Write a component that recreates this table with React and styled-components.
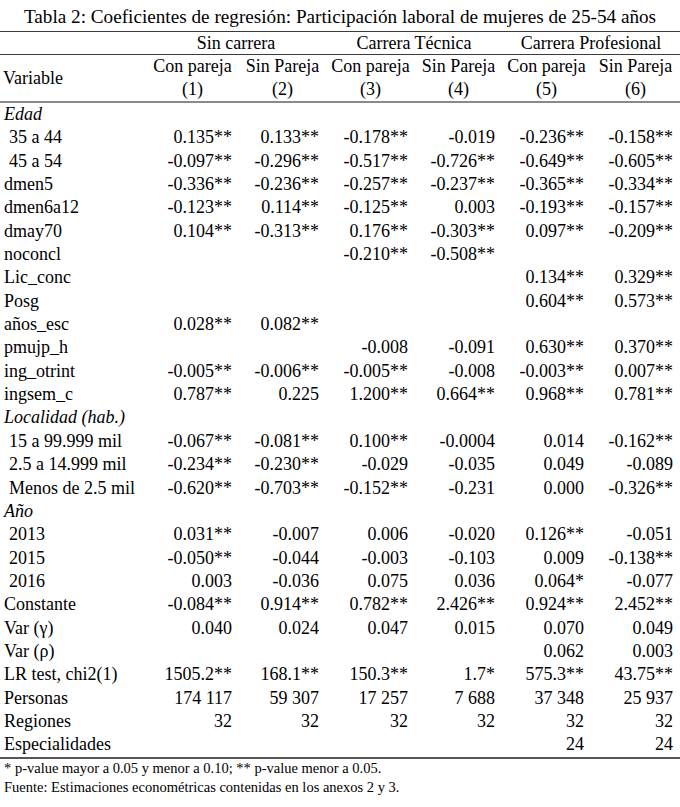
import React from "react";
import styled, { createGlobalStyle } from "styled-components";

const serif = `"Liberation Serif", "Times New Roman", Times, serif`;

const Global = createGlobalStyle`
  html, body { margin: 0; padding: 0; background: #fff; }
  body { font-family: ${serif}; color: #000; }
  table, th, td { font-family: ${serif}; }
`;

const Page = styled.div`
  width: 680px;
  font-family: ${serif};
`;

const Title = styled.div`
  box-sizing: border-box;
  height: 32px;
  padding-top: 5px;
  font-size: 19.2px;
  line-height: 23px;
  text-align: center;
  white-space: nowrap;
  border-bottom: 1px solid #3a3a3a;
`;

const Table = styled.table`
  width: 680px;
  border-collapse: collapse;
  table-layout: fixed;
  font-family: ${serif};
  font-size: 18px;
`;

const GroupRow = styled.tr`
  height: 22px;
  border-bottom: 1px solid #3a3a3a;
`;

const GroupCell = styled.th`
  font-family: ${serif};
  font-weight: normal;
  text-align: center;
  padding: 0;
  line-height: 22px;
`;

const SubRow = styled.tr`
  height: 23px;
  border-bottom: ${(p) => (p.$last ? "2px solid #8a8a8a" : "none")};
`;

const HeadCell = styled.th`
  font-family: ${serif};
  font-weight: normal;
  text-align: ${(p) => (p.$left ? "left" : "center")};
  padding: ${(p) => (p.$left ? "0 0 0 3px" : "0")};
  line-height: 23px;
  white-space: nowrap;
  vertical-align: middle;
`;

const BodyRow = styled.tr`
  height: 23.35px;
  border-bottom: ${(p) => (p.$last ? "2px solid #555" : "none")};
`;

const LabelCell = styled.td`
  font-family: ${serif};
  padding: 0 0 0 ${(p) => (p.$indent ? "9px" : "4px")};
  font-style: ${(p) => (p.$italic ? "italic" : "normal")};
  white-space: nowrap;
  line-height: 23.35px;
`;

const NumCell = styled.td`
  font-family: ${serif};
  padding: 0 7px 0 0;
  text-align: right;
  white-space: nowrap;
  line-height: 23.35px;
`;

const Notes = styled.div`
  font-family: ${serif};
  padding: 0 0 0 4px;
  font-size: 14.5px;
  line-height: 19px;
  white-space: nowrap;
`;

const NoteLine = styled.div`
  font-family: ${serif};
`;

const cols = [146, 93, 87, 89, 87, 89, 89];

const rows = [
  { label: "Edad", italic: true, v: [] },
  { label: "35 a 44", indent: true, v: ["0.135**", "0.133**", "-0.178**", "-0.019", "-0.236**", "-0.158**"] },
  { label: "45 a 54", indent: true, v: ["-0.097**", "-0.296**", "-0.517**", "-0.726**", "-0.649**", "-0.605**"] },
  { label: "dmen5", v: ["-0.336**", "-0.236**", "-0.257**", "-0.237**", "-0.365**", "-0.334**"] },
  { label: "dmen6a12", v: ["-0.123**", "0.114**", "-0.125**", "0.003", "-0.193**", "-0.157**"] },
  { label: "dmay70", v: ["0.104**", "-0.313**", "0.176**", "-0.303**", "0.097**", "-0.209**"] },
  { label: "noconcl", v: ["", "", "-0.210**", "-0.508**", "", ""] },
  { label: "Lic_conc", v: ["", "", "", "", "0.134**", "0.329**"] },
  { label: "Posg", v: ["", "", "", "", "0.604**", "0.573**"] },
  { label: "años_esc", v: ["0.028**", "0.082**", "", "", "", ""] },
  { label: "pmujp_h", v: ["", "", "-0.008", "-0.091", "0.630**", "0.370**"] },
  { label: "ing_otrint", v: ["-0.005**", "-0.006**", "-0.005**", "-0.008", "-0.003**", "0.007**"] },
  { label: "ingsem_c", v: ["0.787**", "0.225", "1.200**", "0.664**", "0.968**", "0.781**"] },
  { label: "Localidad (hab.)", italic: true, v: [] },
  { label: "15 a 99.999 mil", indent: true, v: ["-0.067**", "-0.081**", "0.100**", "-0.0004", "0.014", "-0.162**"] },
  { label: "2.5 a 14.999 mil", indent: true, v: ["-0.234**", "-0.230**", "-0.029", "-0.035", "0.049", "-0.089"] },
  { label: "Menos de 2.5 mil", indent: true, v: ["-0.620**", "-0.703**", "-0.152**", "-0.231", "0.000", "-0.326**"] },
  { label: "Año", italic: true, v: [] },
  { label: "2013", indent: true, v: ["0.031**", "-0.007", "0.006", "-0.020", "0.126**", "-0.051"] },
  { label: "2015", indent: true, v: ["-0.050**", "-0.044", "-0.003", "-0.103", "0.009", "-0.138**"] },
  { label: "2016", indent: true, v: ["0.003", "-0.036", "0.075", "0.036", "0.064*", "-0.077"] },
  { label: "Constante", v: ["-0.084**", "0.914**", "0.782**", "2.426**", "0.924**", "2.452**"] },
  { label: "Var (γ)", v: ["0.040", "0.024", "0.047", "0.015", "0.070", "0.049"] },
  { label: "Var (ρ)", v: ["", "", "", "", "0.062", "0.003"] },
  { label: "LR test, chi2(1)", v: ["1505.2**", "168.1**", "150.3**", "1.7*", "575.3**", "43.75**"] },
  { label: "Personas", v: ["174 117", "59 307", "17 257", "7 688", "37 348", "25 937"] },
  { label: "Regiones", v: ["32", "32", "32", "32", "32", "32"] },
  { label: "Especialidades", v: ["", "", "", "", "24", "24"] },
];

const sub = ["Con pareja", "Sin Pareja", "Con pareja", "Sin Pareja", "Con pareja", "Sin Pareja"];

export default function App() {
  return (
    <Page>
      <Global />
      <Title>Tabla 2: Coeficientes de regresión: Participación laboral de mujeres de 25-54 años</Title>
      <Table>
        <colgroup>
          {cols.map((w, i) => (
            <col key={i} style={{ width: w }} />
          ))}
        </colgroup>
        <thead>
          <GroupRow>
            <GroupCell />
            <GroupCell colSpan={2}>Sin carrera</GroupCell>
            <GroupCell colSpan={2}>Carrera Técnica</GroupCell>
            <GroupCell colSpan={2}>Carrera Profesional</GroupCell>
          </GroupRow>
          <SubRow>
            <HeadCell $left rowSpan={2}>Variable</HeadCell>
            {sub.map((s, i) => (
              <HeadCell key={i}>{s}</HeadCell>
            ))}
          </SubRow>
          <SubRow $last>
            {[1, 2, 3, 4, 5, 6].map((n) => (
              <HeadCell key={n}>({n})</HeadCell>
            ))}
          </SubRow>
        </thead>
        <tbody>
          {rows.map((r, i) => (
            <BodyRow key={i} $last={i === rows.length - 1}>
              <LabelCell $indent={r.indent} $italic={r.italic}>{r.label}</LabelCell>
              {[0, 1, 2, 3, 4, 5].map((j) => (
                <NumCell key={j}>{r.v[j] || ""}</NumCell>
              ))}
            </BodyRow>
          ))}
        </tbody>
      </Table>
      <Notes>
        <NoteLine>* p-value mayor a 0.05 y menor a 0.10; ** p-value menor a 0.05.</NoteLine>
        <NoteLine>Fuente: Estimaciones econométricas contenidas en los anexos 2 y 3.</NoteLine>
      </Notes>
    </Page>
  );
}
